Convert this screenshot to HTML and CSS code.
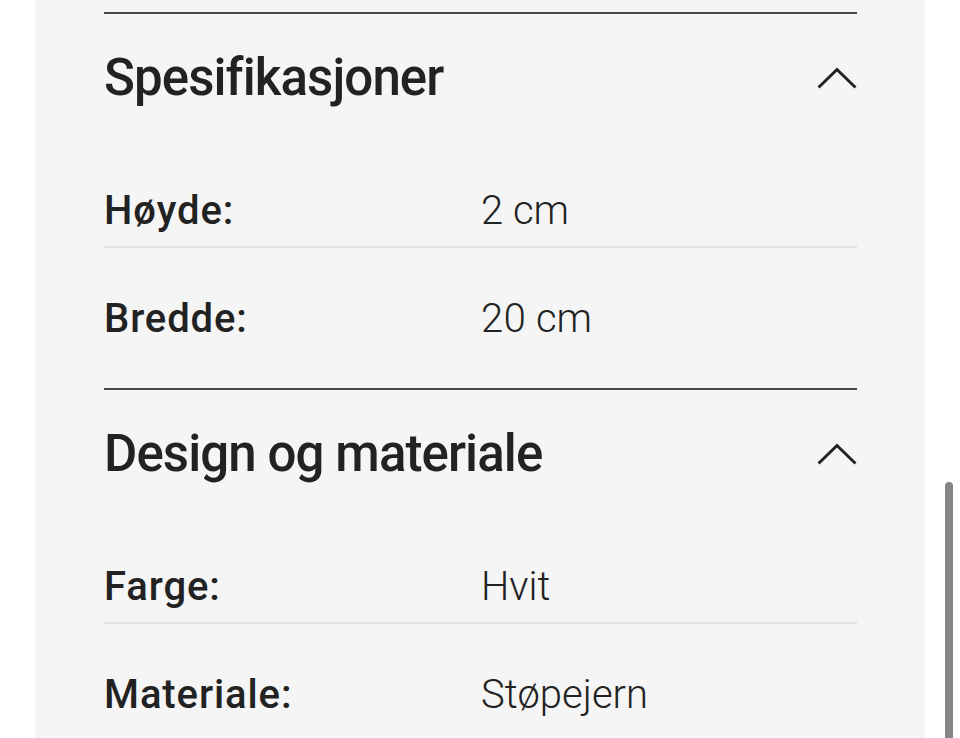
FILE: index.html
```html
<!DOCTYPE html>
<html lang="no">
<head>
<meta charset="utf-8">
<title>Spesifikasjoner</title>
<link rel="stylesheet" href="styles.css">
</head>
<body>
<div class="page">
  <div class="panel">
    <section class="acc">
      <div class="acc-head">
        <h2 class="acc-title">Spesifikasjoner</h2>
        <svg class="chev" width="40" height="22" viewBox="0 0 40 22"><polyline points="1.5,20.5 20,2.5 38.5,20.5" fill="none" stroke="#222" stroke-width="3"/></svg>
      </div>
      <div class="acc-body">
        <div class="row"><span class="lbl">Høyde:</span><span class="val">2 cm</span></div>
        <div class="row"><span class="lbl">Bredde:</span><span class="val">20 cm</span></div>
      </div>
    </section>
    <section class="acc">
      <div class="acc-head">
        <h2 class="acc-title">Design og materiale</h2>
        <svg class="chev" width="40" height="22" viewBox="0 0 40 22"><polyline points="1.5,20.5 20,2.5 38.5,20.5" fill="none" stroke="#222" stroke-width="3"/></svg>
      </div>
      <div class="acc-body">
        <div class="row"><span class="lbl">Farge:</span><span class="val">Hvit</span></div>
        <div class="row"><span class="lbl">Materiale:</span><span class="val">Støpejern</span></div>
      </div>
    </section>
  </div>
  <div class="scrollthumb"></div>
</div>
</body>
</html>
```
FILE: styles.css
```css
html, body {
  margin: 0;
  padding: 0;
  background: #ffffff;
  height: 100%;
  overflow: hidden;
}
body {
  font-family: Roboto, "Noto Sans", sans-serif;
  color: #222222;
}
.page {
  position: relative;
  width: 960px;
  height: 738px;
}
.panel {
  margin-left: 35px;
  width: 890px;
  height: 100%;
  box-sizing: border-box;
  background: #f5f5f5;
  padding: 12px 68px 0 69px;
}
.acc {
  border-top: 2px solid #4a4a4a;
  padding-bottom: 34px;
}
.acc-head {
  display: flex;
  align-items: center;
  justify-content: space-between;
  padding: 34px 0 32px;
}
.acc-title {
  margin: 0;
  font-size: 51px;
  line-height: 60px;
  font-weight: 500;
  letter-spacing: -0.9px;
  color: #222;
}
.chev {
  display: block;
}
.row {
  display: grid;
  grid-template-columns: 377px 1fr;
  padding: 47px 0 11px;
  font-size: 40px;
  line-height: 48px;
}
.row:not(:last-child) {
  border-bottom: 2px solid #e1e1e1;
}
.lbl {
  font-weight: 500;
  letter-spacing: 0.9px;
}
.val {
  font-weight: 300;
  font-variant-numeric: proportional-nums;
}
.scrollthumb {
  position: absolute;
  left: 945px;
  top: 482px;
  width: 8px;
  height: 270px;
  border-radius: 4px;
  background: #858585;
}
```
